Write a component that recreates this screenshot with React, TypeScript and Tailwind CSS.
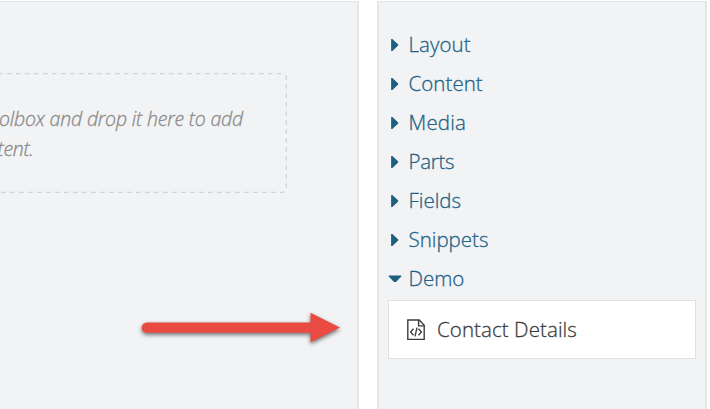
const CATEGORIES = [
  { name: "Layout", tracking: "tracking-[0.05px]" },
  { name: "Content", tracking: "tracking-[0.05px]" },
  { name: "Media", tracking: "tracking-[0.2px]" },
  { name: "Parts", tracking: "tracking-[-0.3px]" },
  { name: "Fields", tracking: "tracking-[0px]" },
  { name: "Snippets", tracking: "tracking-[0px]" },
  { name: "Demo", tracking: "tracking-[0px]", open: true },
];

function Caret({ open }: { open?: boolean }) {
  return (
    <svg width="14" height="16" viewBox="0 0 14 16" className="shrink-0" fill="#1c5f80">
      {open ? <path d="M0.8 4.6H13.2V5.6L8 11H6L0.8 5.6Z" /> : <path d="M3.1 2H4.4L10.2 7.6V8.4L4.4 14H3.1Z" />}
    </svg>
  );
}

function CodeFile() {
  return (
    <svg width="18" height="22" viewBox="0 0 18 22" fill="none" stroke="#3c3c3c" className="shrink-0">
      <path d="M0.8 1H12.2L17.2 6.2V20.4H0.8Z" strokeWidth="1.4" />
      <path d="M11.6 1V6.9H17.2" strokeWidth="1.4" />
      <path d="M6.5 9.8L3.6 13L6.5 16.2M11.5 9.8L14.4 13L11.5 16.2M10 8.7L8 17.4" strokeWidth="1.35" />
    </svg>
  );
}

export default function App() {
  return (
    <div className="relative flex h-[409px] w-[710px] overflow-hidden bg-white pt-px font-['Open_Sans','Noto_Sans',sans-serif] font-[360] [-webkit-text-stroke:0.3px_currentColor]">
      <main className="h-[420px] w-[359px] shrink-0 border-t-[1.5px] border-r-2 border-[#e3e5e7] bg-[#f2f3f5] pt-[71px]">
        <div className="relative flex h-[120px] w-[287px] flex-col pt-[31px] text-[19.5px] leading-[30px] text-[#8a8a8a] italic">
          <svg className="absolute inset-0" width="287" height="120" fill="none">
            <path
              d="M-2 0.7H282Q286.3 0.7 286.3 5V115Q286.3 119.3 282 119.3H-2"
              stroke="#d1d2d3"
              strokeWidth="1.3"
              strokeDasharray="4.5 4.5"
            />
          </svg>
          <p className="-ml-px whitespace-nowrap tracking-[-0.18px]">olbox and drop it here to add</p>
          <p className="-ml-[2.5px] whitespace-nowrap tracking-[-0.3px]">tent.</p>
        </div>
      </main>

      <aside className="ml-[18px] h-[420px] w-[330px] shrink-0 border-2 border-t-[1.5px] border-[#e3e5e7] bg-[#f2f3f5] px-[9px] pt-[23px]">
        <ul>
          {CATEGORIES.map((c) => (
            <li key={c.name} className="flex h-[39px] items-center gap-[6.5px] text-[20.5px] text-[#1f6285]">
              <Caret open={c.open} />
              <span className={c.tracking}>{c.name}</span>
            </li>
          ))}
        </ul>
        <div className="mt-[2px] flex h-[59px] items-center gap-3 border border-[#dfe1e3] bg-white pl-[18px] text-[20.5px] text-[#3c3c3c]">
          <CodeFile />
          <span className="whitespace-nowrap tracking-[0.08px]">Contact Details</span>
        </div>
      </aside>

      <svg className="absolute top-[305px] left-[134px] drop-shadow-[0_2px_2px_rgba(0,0,0,0.55)]" width="216" height="50" fill="#e94b43">
        <path d="M12.8 17.5H176.5V7.8L206 22.5L176.5 37.2V27.8H12.8A5.15 5.15 0 0 1 12.8 17.5Z" />
      </svg>
    </div>
  );
}
